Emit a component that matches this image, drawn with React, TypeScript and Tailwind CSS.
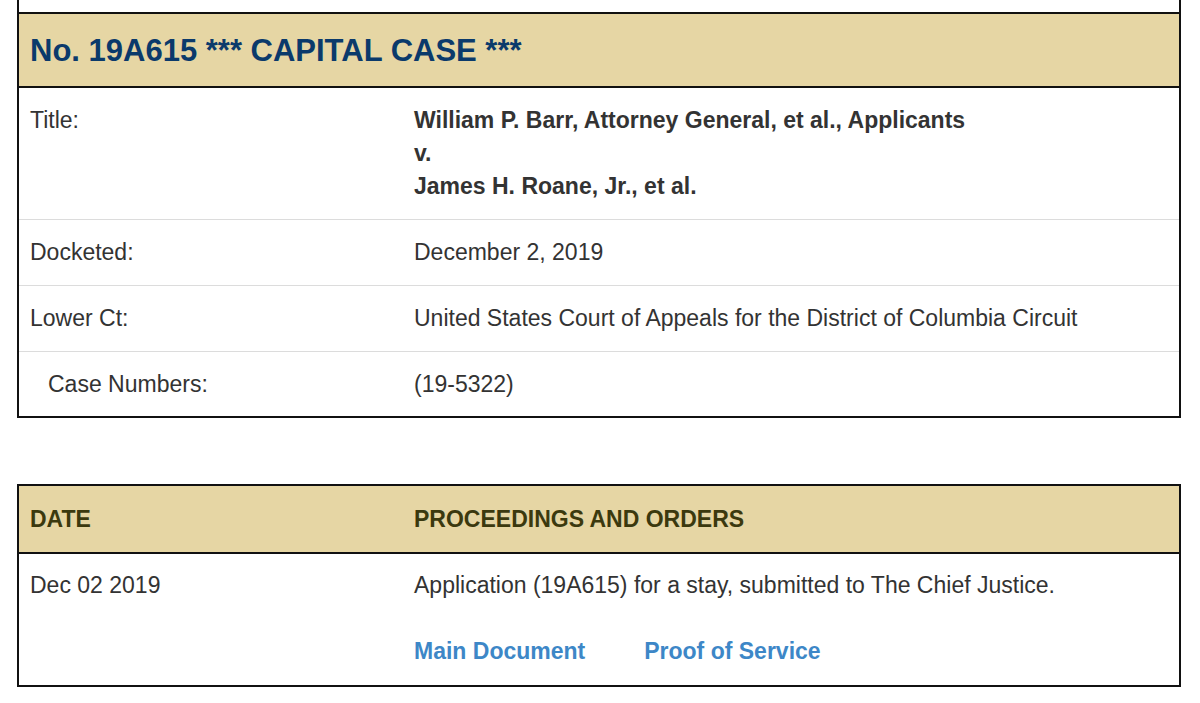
const font = { fontFamily: '"Liberation Sans", Arial, sans-serif' };

const InfoRow = ({
  label,
  children,
  indent,
  last,
}: {
  label: string;
  children: React.ReactNode;
  indent?: boolean;
  last?: boolean;
}) => (
  <div className={`flex pt-[16px] ${last ? "pb-[15px]" : "pb-[16px] border-b border-[#dcdcdc]"}`}>
    <div className={`w-[395px] shrink-0 ${indent ? "pl-[29px]" : "pl-[11px]"}`}>{label}</div>
    <div className="flex-1">{children}</div>
  </div>
);

export default function App() {
  return (
    <div className="min-h-screen bg-white text-[23px] leading-[33px] text-[#333]" style={font}>
      <div className="ml-[17px] w-[1164px]">
        <section className="border-x-2 border-b-2 border-[#111]">
          <div className="h-[12px]" />
          <div className="flex h-[76px] items-center border-y-2 border-[#111] bg-[#e6d6a4] pl-[11px]">
            <h1 className="text-[31px] font-bold text-[#0b3a6b]">No. 19A615 *** CAPITAL CASE ***</h1>
          </div>
          <InfoRow label="Title:">
            <div className="font-bold">
              <div>William P. Barr, Attorney General, et al., Applicants</div>
              <div>v.</div>
              <div>James H. Roane, Jr., et al.</div>
            </div>
          </InfoRow>
          <InfoRow label="Docketed:">December 2, 2019</InfoRow>
          <InfoRow label="Lower Ct:">United States Court of Appeals for the District of Columbia Circuit</InfoRow>
          <InfoRow label="Case Numbers:" indent last>
            (19-5322)
          </InfoRow>
        </section>

        <section className="mt-[66px] border-2 border-[#111]">
          <div className="flex h-[68px] items-center border-b-2 border-[#111] bg-[#e6d6a4] font-bold text-[#3b390e]">
            <div className="w-[395px] shrink-0 pl-[11px]">DATE</div>
            <div className="flex-1">PROCEEDINGS AND ORDERS</div>
          </div>
          <div className="flex pt-[15px] pb-[17px]">
            <div className="w-[395px] shrink-0 pl-[11px]">Dec 02 2019</div>
            <div className="flex-1">
              <div>Application (19A615) for a stay, submitted to The Chief Justice.</div>
              <div className="mt-[33px] flex gap-[59px] font-bold text-[#3d87c7]">
                <a href="#">Main Document</a>
                <a href="#">Proof of Service</a>
              </div>
            </div>
          </div>
        </section>
      </div>
    </div>
  );
}
